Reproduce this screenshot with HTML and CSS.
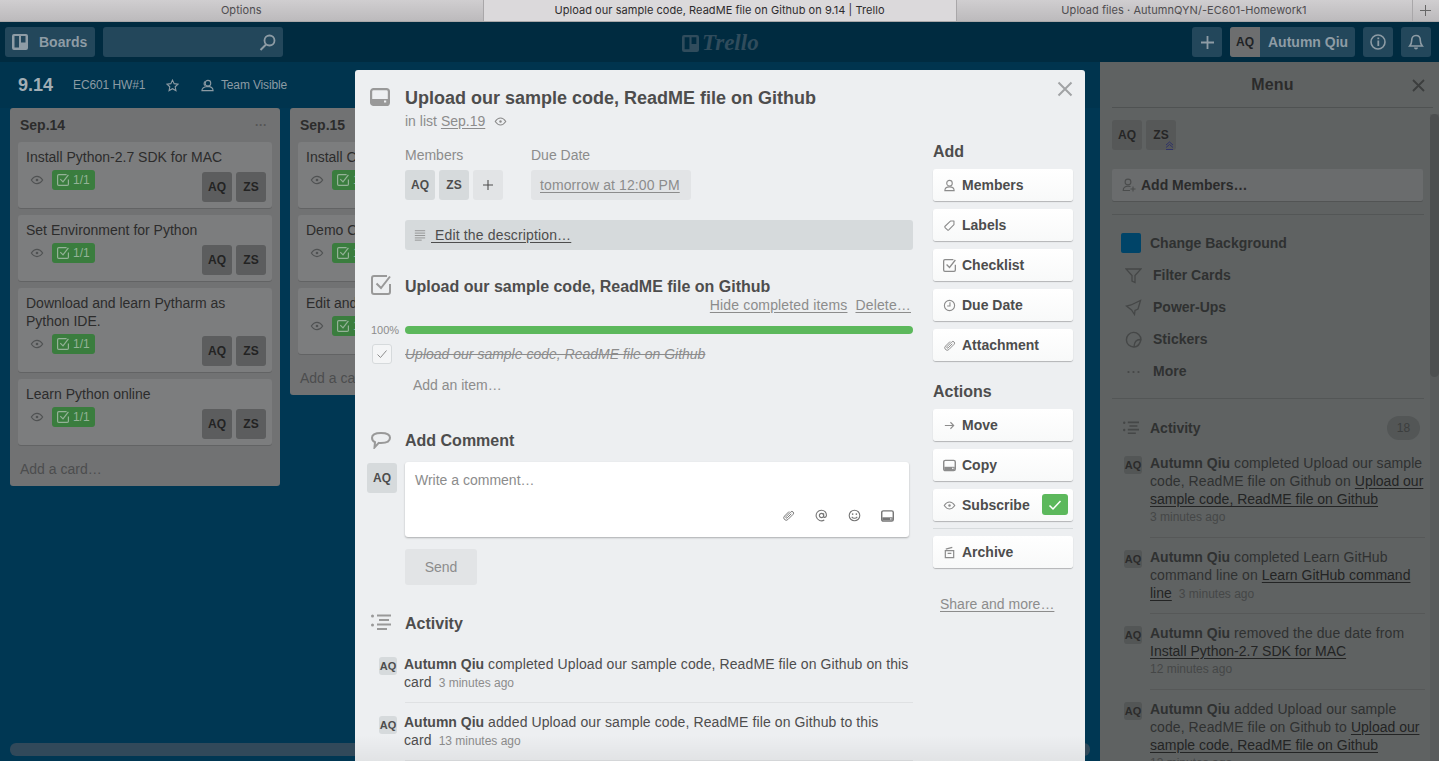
FILE: index.html
```html
<!DOCTYPE html>
<html lang="en">
<head>
<meta charset="utf-8">
<title>Upload our sample code, ReadME file on Github on 9.14 | Trello</title>
<link rel="stylesheet" href="styles.css">
</head>
<body>
<svg class="sprites" width="0" height="0" aria-hidden="true">
  <symbol id="i-card" viewBox="0 0 20 18"><rect x="1.100" y="1.100" width="17.800" height="15.800" rx="2.500" fill="none" stroke="currentColor" stroke-width="2.200"/><path d="M2 11h16v5H2z" fill="currentColor"/><rect x="14" y="12.500" width="2.200" height="2" fill="#eeeff1"/></symbol>
  <symbol id="i-eye" viewBox="0 0 16 16"><path d="M1.500 8C3.500 5 5.600 3.800 8 3.800S12.500 5 14.500 8c-2 3-4.100 4.200-6.500 4.200S3.500 11 1.500 8z" fill="none" stroke="currentColor" stroke-width="1.300"/><circle cx="8" cy="8" r="1.500" fill="currentColor"/></symbol>
  <symbol id="i-check" viewBox="0 0 20 20"><path d="M19 9v8a2 2 0 0 1-2 2H3a2 2 0 0 1-2-2V3a2 2 0 0 1 2-2h13" fill="none" stroke="currentColor" stroke-width="2"/><path d="M5.500 8.500l4.500 4.500 9-11.500" fill="none" stroke="currentColor" stroke-width="2"/></symbol>
  <symbol id="i-desc" viewBox="0 0 14 14"><path d="M1 2h12M1 4.800h12M1 7.600h12M1 10.400h12M1 13h8" stroke="currentColor" stroke-width="1" fill="none"/></symbol>
  <symbol id="i-list" viewBox="0 0 20 17"><circle cx="1.500" cy="2" r="1.500" fill="currentColor"/><circle cx="1.500" cy="11" r="1.500" fill="currentColor"/><path d="M6 1.500h14M8 6h10M6 10.500h14M6 15h10" stroke="currentColor" stroke-width="2" fill="none"/></symbol>
  <symbol id="i-comment" viewBox="0 0 20 17"><path d="M10 1c5.200 0 9 1.500 9 4.800s-3.800 5.200-9 5.200c-.8 0-1.500 0-2.200-.1L3.500 15.500l.5-5.300C2 9.300 1 7.800 1 5.800 1 2.500 4.800 1 10 1z" fill="none" stroke="currentColor" stroke-width="2"/></symbol>
  <symbol id="i-member" viewBox="0 0 14 14"><circle cx="7" cy="4.500" r="3" fill="none" stroke="currentColor" stroke-width="1.200"/><path d="M2 12.500c0-3 2-4 5-4s5 1 5 4z" fill="none" stroke="currentColor" stroke-width="1.200"/></symbol>
  <symbol id="i-member-add" viewBox="0 0 14 14"><circle cx="6" cy="4" r="2.900" fill="none" stroke="currentColor" stroke-width="1.100"/><path d="M8 12.500H1.200c0-3 1.800-4.300 4.800-4.300 1 0 1.800.1 2.500.4" fill="none" stroke="currentColor" stroke-width="1.100"/><path d="M11 8.500v5M8.500 11h5" fill="none" stroke="currentColor" stroke-width="1.100"/></symbol>
  <symbol id="i-label" viewBox="0 0 14 14"><path d="M8 2.200h3.800v3.800L6.200 11.800a1 1 0 0 1-1.400 0L2.200 9.200a1 1 0 0 1 0-1.400z" fill="none" stroke="currentColor" stroke-width="1.200" stroke-linejoin="round"/></symbol>
  <symbol id="i-clock" viewBox="0 0 14 14"><circle cx="7" cy="7" r="5.500" fill="none" stroke="currentColor" stroke-width="1.200"/><path d="M7.500 3.500V7.500H4.500" fill="none" stroke="currentColor" stroke-width="1.200"/></symbol>
  <symbol id="i-clip" viewBox="0 0 14 14"><g transform="rotate(45 7 7)"><path d="M4.400 3.500v7a2.600 2.600 0 0 0 5.200 0V2.600a1.800 1.800 0 0 0-3.600 0V9.800a.9.900 0 0 0 1.800 0V3.500" fill="none" stroke="currentColor" stroke-width="1"/></g></symbol>
  <symbol id="i-arrow" viewBox="0 0 14 14"><path d="M2 7h9.500M8 3.500L11.500 7 8 10.500" fill="none" stroke="currentColor" stroke-width="1.200"/></symbol>
  <symbol id="i-archive" viewBox="0 0 14 14"><path d="M2.500 5h9v7.500h-9zM5 8h4" fill="none" stroke="currentColor" stroke-width="1.300"/><path d="M3 3.300L10 1.500" fill="none" stroke="currentColor" stroke-width="1.300"/></symbol>
  <symbol id="i-at" viewBox="0 0 14 14"><circle cx="7" cy="7" r="2.300" fill="none" stroke="currentColor" stroke-width="1.200"/><path d="M9.300 4.700V8c0 1.500 2.700 1.500 3-.8C12.500 3.500 10 1.300 7 1.300a5.700 5.700 0 1 0 3 10.500" fill="none" stroke="currentColor" stroke-width="1.200"/></symbol>
  <symbol id="i-smile" viewBox="0 0 14 14"><circle cx="7" cy="7" r="5.700" fill="none" stroke="currentColor" stroke-width="1.200"/><circle cx="5" cy="5.500" r=".9" fill="currentColor"/><circle cx="9" cy="5.500" r=".9" fill="currentColor"/><path d="M4 8.500c1.500 2 4.500 2 6 0" fill="none" stroke="currentColor" stroke-width="1.200"/></symbol>
</svg>

<nav class="tabs">
  <div class="tab">Options</div>
  <div class="tab tab-active">Upload our sample code, ReadME file on Github on 9.14 | Trello</div>
  <div class="tab">Upload files · AutumnQYN/-EC601-Homework1</div>
  <div class="tab-plus"><svg width="13" height="13" viewBox="0 0 13 13"><path d="M6.500 1v11M1 6.500h11" stroke="currentColor" stroke-width="1" fill="none"/></svg></div>
</nav>

<header class="topbar">
  <div class="topbar-left">
    <div class="hbtn boards-btn">
      <svg class="boards-icon" width="16" height="16" viewBox="0 0 16 16"><path fill-rule="evenodd" d="M2 0h12a2 2 0 0 1 2 2v12a2 2 0 0 1-2 2H2a2 2 0 0 1-2-2V2a2 2 0 0 1 2-2zm.500 2v11.500h4.500V2zM9 2v6.500h4.500V2z" fill="currentColor"/></svg>
      <span>Boards</span>
    </div>
    <div class="hbtn search">
      <svg width="17" height="17" viewBox="0 0 17 17"><circle cx="10.500" cy="6.500" r="5" fill="none" stroke="currentColor" stroke-width="1.800"/><path d="M7 10.500L1.500 16" stroke="currentColor" stroke-width="2" fill="none"/></svg>
    </div>
  </div>
  <div class="logo">
    <svg width="17" height="17" viewBox="0 0 16 16"><path fill-rule="evenodd" d="M2 0h12a2 2 0 0 1 2 2v12a2 2 0 0 1-2 2H2a2 2 0 0 1-2-2V2a2 2 0 0 1 2-2zm.500 2v11.500h4.500V2zM9 2v6.500h4.500V2z" fill="currentColor"/></svg>
    <span>Trello</span>
  </div>
  <div class="topbar-right">
    <div class="hbtn square"><svg width="15" height="15" viewBox="0 0 15 15"><path d="M7.500 1v13M1 7.500h13" stroke="currentColor" stroke-width="1.800" fill="none"/></svg></div>
    <div class="hbtn user"><span class="user-av">AQ</span><span class="user-name">Autumn Qiu</span></div>
    <div class="hbtn square"><svg width="16" height="16" viewBox="0 0 16 16"><circle cx="8" cy="8" r="7" fill="none" stroke="currentColor" stroke-width="1.600"/><path d="M8.300 6.500v5.500M8.300 3.500v1.800" stroke="currentColor" stroke-width="1.800" fill="none"/></svg></div>
    <div class="hbtn square"><svg width="16" height="17" viewBox="0 0 16 17"><path d="M8 1.500c3 0 4.300 2 4.300 5 0 3 .7 4 2 5.500H1.700C3 10.500 3.700 9.500 3.700 6.500c0-3 1.300-5 4.300-5z" fill="none" stroke="currentColor" stroke-width="1.600"/><path d="M6 13.500c0 2.500 4 2.500 4 0" fill="currentColor"/></svg></div>
  </div>
</header>

<div class="workspace">
  <main class="board">
    <div class="board-head">
      <span class="board-title">9.14</span>
      <span class="board-org">EC601 HW#1</span>
      <svg class="star" width="13" height="13" viewBox="0 0 14 14"><path d="M7 1.200l1.800 3.800 4.100.5-3 2.900.8 4.100L7 10.500 3.300 12.500l.8-4.100-3-2.900 4.100-.5z" fill="none" stroke="currentColor" stroke-width="1.200"/></svg>
      <svg class="team" width="13" height="13" viewBox="0 0 14 14"><circle cx="7.500" cy="4.500" r="3" fill="none" stroke="currentColor" stroke-width="1.200"/><path d="M4.500 2.800C3 3.500 3 6 4.200 7M1 12.500c0-2.500 1.500-4 5.500-4.500 3.500 0 6.500 1.500 6.500 4.500z" fill="none" stroke="currentColor" stroke-width="1.200"/></svg>
      <span class="board-vis">Team Visible</span>
    </div>
    <div class="lists">
      <section class="list">
        <div class="list-head"><span>Sep.14</span><span class="dots">···</span></div>
        <article class="bcard">
          <p>Install Python-2.7 SDK for MAC</p>
          <div class="bcard-foot">
            <div class="badges"><svg class="beye"><use href="#i-eye"/></svg><span class="chk"><svg><use href="#i-check"/></svg>1/1</span></div>
            <div class="avs"><span class="av">AQ</span><span class="av">ZS</span></div>
          </div>
        </article>
        <article class="bcard">
          <p>Set Environment for Python</p>
          <div class="bcard-foot">
            <div class="badges"><svg class="beye"><use href="#i-eye"/></svg><span class="chk"><svg><use href="#i-check"/></svg>1/1</span></div>
            <div class="avs"><span class="av">AQ</span><span class="av">ZS</span></div>
          </div>
        </article>
        <article class="bcard">
          <p>Download and learn Pytharm as Python IDE.</p>
          <div class="bcard-foot">
            <div class="badges"><svg class="beye"><use href="#i-eye"/></svg><span class="chk"><svg><use href="#i-check"/></svg>1/1</span></div>
            <div class="avs"><span class="av">AQ</span><span class="av">ZS</span></div>
          </div>
        </article>
        <article class="bcard">
          <p>Learn Python online</p>
          <div class="bcard-foot">
            <div class="badges"><svg class="beye"><use href="#i-eye"/></svg><span class="chk"><svg><use href="#i-check"/></svg>1/1</span></div>
            <div class="avs"><span class="av">AQ</span><span class="av">ZS</span></div>
          </div>
        </article>
        <div class="add-card">Add a card…</div>
      </section>
      <section class="list">
        <div class="list-head"><span>Sep.15</span><span class="dots">···</span></div>
        <article class="bcard">
          <p>Install Cmake</p>
          <div class="bcard-foot">
            <div class="badges"><svg class="beye"><use href="#i-eye"/></svg><span class="chk"><svg><use href="#i-check"/></svg>1/1</span></div>
            <div class="avs"><span class="av">AQ</span><span class="av">ZS</span></div>
          </div>
        </article>
        <article class="bcard">
          <p>Demo Code</p>
          <div class="bcard-foot">
            <div class="badges"><svg class="beye"><use href="#i-eye"/></svg><span class="chk"><svg><use href="#i-check"/></svg>1/1</span></div>
            <div class="avs"><span class="av">AQ</span><span class="av">ZS</span></div>
          </div>
        </article>
        <article class="bcard">
          <p>Edit and run</p>
          <div class="bcard-foot">
            <div class="badges"><svg class="beye"><use href="#i-eye"/></svg><span class="chk"><svg><use href="#i-check"/></svg>1/1</span></div>
            <div class="avs"><span class="av">AQ</span><span class="av">ZS</span></div>
          </div>
        </article>
        <div class="add-card">Add a card…</div>
      </section>
    </div>
    <div class="hscroll"></div>
  </main>

  <aside class="menu">
    <div class="menu-head"><span>Menu</span><svg class="menu-x" width="13" height="13" viewBox="0 0 13 13"><path d="M1 1l11 11M12 1L1 12" stroke="currentColor" stroke-width="1.800" fill="none"/></svg></div>
    <div class="menu-body">
      <div class="menu-avs">
        <span class="av">AQ</span>
        <span class="av av-admin">ZS<svg class="chev" width="9" height="9" viewBox="0 0 9 9"><path d="M1 4l3.500-3L8 4M1 6.500l3.500-3L8 6.500M1 8.500h7" fill="none" stroke="#2a2f6a" stroke-width=".9"/></svg></span>
      </div>
      <div class="add-members"><svg width="14" height="14"><use href="#i-member-add"/></svg>Add Members…</div>
      <div class="menu-links">
        <div class="mlink mlink-bg"><span class="swatch"></span>Change Background</div>
        <div class="mlink"><svg width="17" height="17" viewBox="0 0 17 17"><path d="M1 2h15L10 8.500V15.500L7 14V8.500z" fill="none" stroke="currentColor" stroke-width="1.300"/></svg>Filter Cards</div>
        <div class="mlink"><svg width="17" height="17" viewBox="0 0 17 17"><path d="M15.500 1.500L13 10l-3 1.500-.5 4-3-4.500L1.500 7l4.500-1z" fill="none" stroke="currentColor" stroke-width="1.300"/></svg>Power-Ups</div>
        <div class="mlink"><svg width="17" height="17" viewBox="0 0 17 17"><path d="M9 16a7.300 7.300 0 1 1 7-7.500C11.500 8 9 11 9 16zM9 16c3.500 0 6-3 7-7.500" fill="none" stroke="currentColor" stroke-width="1.400"/></svg>Stickers</div>
        <div class="mlink"><svg width="17" height="17" viewBox="0 0 17 17"><circle cx="3.500" cy="9" r="1.100" fill="currentColor"/><circle cx="8.500" cy="9" r="1.100" fill="currentColor"/><circle cx="13.500" cy="9" r="1.100" fill="currentColor"/></svg>More</div>
      </div>
      <div class="menu-act-head">
        <svg width="16" height="14"><use href="#i-list"/></svg><span>Activity</span><span class="count">18</span>
      </div>
      <div class="mact">
        <span class="mini">AQ</span>
        <p><b>Autumn Qiu</b> completed Upload our sample code, ReadME file on Github on <u>Upload our sample code, ReadME file on Github</u> <time class="block">3 minutes ago</time></p>
      </div>
      <div class="mact">
        <span class="mini">AQ</span>
        <p><b>Autumn Qiu</b> completed Learn GitHub command line on <u>Learn GitHub command line</u> <time>3 minutes ago</time></p>
      </div>
      <div class="mact">
        <span class="mini">AQ</span>
        <p><b>Autumn Qiu</b> removed the due date from <u>Install Python-2.7 SDK for MAC</u> <time class="block">12 minutes ago</time></p>
      </div>
      <div class="mact">
        <span class="mini">AQ</span>
        <p><b>Autumn Qiu</b> added Upload our sample code, ReadME file on Github to <u>Upload our sample code, ReadME file on Github</u> <time class="block">13 minutes ago</time></p>
      </div>
    </div>
    <div class="menu-scroll"></div>
  </aside>
</div>

<div class="modal">
  <svg class="modal-x" width="16" height="16" viewBox="0 0 16 16"><path d="M1.500 1.500l13 13M14.500 1.500l-13 13" stroke="currentColor" stroke-width="2" fill="none"/></svg>
  <div class="modal-title">
    <svg class="sec-icon" width="20" height="18"><use href="#i-card"/></svg>
    <h2>Upload our sample code, ReadME file on Github</h2>
  </div>
  <div class="in-list">in list <u>Sep.19</u><svg width="13" height="13"><use href="#i-eye"/></svg></div>
  <div class="modal-cols">
    <div class="modal-main">
      <div class="meta">
        <div class="meta-col">
          <div class="meta-label">Members</div>
          <div class="meta-row"><span class="av">AQ</span><span class="av">ZS</span><span class="av av-plus"><svg width="12" height="12" viewBox="0 0 12 12"><path d="M6 1v10M1 6h10" stroke="currentColor" stroke-width="1.100" fill="none"/></svg></span></div>
        </div>
        <div class="meta-col">
          <div class="meta-label">Due Date</div>
          <div class="due"><u>tomorrow at 12:00 PM</u></div>
        </div>
      </div>
      <div class="edit-desc"><svg width="12" height="12"><use href="#i-desc"/></svg><u>&nbsp;Edit the description…</u></div>

      <div class="sec-head check-head">
        <svg class="sec-icon" width="20" height="20"><use href="#i-check"/></svg>
        <h3>Upload our sample code, ReadME file on Github</h3>
      </div>
      <div class="check-actions"><u>Hide completed items</u><u>Delete…</u></div>
      <div class="progress"><span class="pct">100%</span><div class="bar"></div></div>
      <div class="item">
        <span class="box"><svg width="12" height="12" viewBox="0 0 12 12"><path d="M1.500 6.500l3 3 6-7" fill="none" stroke="currentColor" stroke-width="1"/></svg></span>
        <s>Upload our sample code, ReadME file on Github</s>
      </div>
      <div class="add-item">Add an item…</div>

      <div class="sec-head comment-head">
        <svg class="sec-icon" width="20" height="17"><use href="#i-comment"/></svg>
        <h3>Add Comment</h3>
      </div>
      <div class="comment-row">
        <span class="av comment-av">AQ</span>
        <div class="comment-box">
          <div class="placeholder">Write a comment…</div>
          <div class="comment-tools">
            <svg width="13" height="13"><use href="#i-clip"/></svg>
            <svg width="13" height="13"><use href="#i-at"/></svg>
            <svg width="13" height="13"><use href="#i-smile"/></svg>
            <svg width="13" height="12"><use href="#i-card"/></svg>
          </div>
        </div>
      </div>
      <div class="send">Send</div>

      <div class="sec-head activity-head">
        <svg class="sec-icon" width="20" height="17"><use href="#i-list"/></svg>
        <h3>Activity</h3>
      </div>
      <div class="act">
        <span class="mini">AQ</span>
        <p><b>Autumn Qiu</b> completed Upload our sample code, ReadME file on Github on this<br>card <time>3 minutes ago</time></p>
      </div>
      <div class="act">
        <span class="mini">AQ</span>
        <p><b>Autumn Qiu</b> added Upload our sample code, ReadME file on Github to this<br>card <time>13 minutes ago</time></p>
      </div>
    </div>
    <div class="modal-side">
      <h4 class="side-first">Add</h4>
      <div class="sbtn"><svg><use href="#i-member"/></svg>Members</div>
      <div class="sbtn"><svg><use href="#i-label"/></svg>Labels</div>
      <div class="sbtn"><svg><use href="#i-check"/></svg>Checklist</div>
      <div class="sbtn"><svg><use href="#i-clock"/></svg>Due Date</div>
      <div class="sbtn"><svg><use href="#i-clip"/></svg>Attachment</div>
      <h4 class="side-actions">Actions</h4>
      <div class="sbtn"><svg><use href="#i-arrow"/></svg>Move</div>
      <div class="sbtn"><svg><use href="#i-card"/></svg>Copy</div>
      <div class="sbtn"><svg><use href="#i-eye"/></svg>Subscribe<span class="on"><svg viewBox="0 0 14 14"><path d="M1.500 7.500l3.500 3.500 7.500-8" fill="none" stroke="currentColor" stroke-width="1.500"/></svg></span></div>
      <div class="side-sep"></div>
      <div class="sbtn"><svg><use href="#i-archive"/></svg>Archive</div>
      <div class="share"><u>Share and more…</u></div>
    </div>
  </div>
</div>
</body>
</html>
```
FILE: styles.css
```css
* { box-sizing: border-box; }
html, body { height: 100%; }
body {
  margin: 0;
  width: 1439px;
  height: 761px;
  overflow: hidden;
  font-family: "Liberation Sans", Arial, sans-serif;
  font-size: 14px;
  line-height: 18px;
  background: #003650;
  color: #4d4d4d;
  display: flex;
  flex-direction: column;
  position: relative;
}
p, h2, h3, h4 { margin: 0; }
u { text-underline-offset: 2px; }
.sprites { position: absolute; }

/* browser tabs */
.tabs {
  height: 22px;
  flex: none;
  display: flex;
  font-size: 11px;
  line-height: 20px;
  letter-spacing: .05px;
  color: #4f4d50;
  background: linear-gradient(#d0ced0, #bcbabc);
  border-bottom: 1px solid #a9a8a9;
  font-family: "Inter", "Liberation Sans", sans-serif;
}
.tab { width: 483.5px; text-align: center; border-right: 1px solid #a9a7a9; }
.tab:nth-child(3) { width: 456px; }
.tab-active { width: 473px; background: #dbd9db; color: #2e2c2e; }
.tab-plus { flex: 1; display: flex; align-items: center; justify-content: center; color: #666; }

/* header */
.topbar {
  height: 40px;
  flex: none;
  background: #002b40;
  display: flex;
  align-items: center;
  justify-content: space-between;
  padding: 0 8px 0 5px;
  position: relative;
}
.topbar-left, .topbar-right { display: flex; gap: 8px; align-items: center; }
.hbtn {
  height: 30px;
  border-radius: 3px;
  background: #23475b;
  color: #8e9ca5;
  display: flex;
  align-items: center;
}
.boards-btn { width: 90px; padding-left: 7px; gap: 11px; font-weight: 700; }
.search { width: 180px; justify-content: flex-end; padding-right: 7px; }
.square { width: 30px; justify-content: center; }
.user { overflow: hidden; width: 125px; font-weight: 700; }
.user-av { width: 30px; height: 30px; background: #6d6e6f; color: #1f2326; font-size: 12px; display: flex; align-items: center; justify-content: center; }
.user-name { padding-left: 8px; white-space: nowrap; }
.logo {
  position: absolute;
  left: 682px;
  top: 10px;
  display: flex;
  align-items: center;
  gap: 3px;
  color: #304c5c;
  font: italic 700 23px/22px "Liberation Serif", serif;
}

/* board area */
.workspace { flex: 1; display: flex; min-height: 0; }
.board { flex: 1; min-width: 0; position: relative; background: #003753; }
.board-head {
  height: 46px;
  display: flex;
  align-items: center;
  padding: 0 0 0 18px;
  color: #8c9ba4;
  font-size: 12px;
  background: #00344e;
}
.board-title { font-size: 18px; font-weight: 700; color: #a2aeb5; width: 55px; }
.board-org { width: 93px; letter-spacing: -.1px; }
.star { margin-right: 22px; }
.team { margin-right: 7px; }
.board-vis { letter-spacing: -.15px; }
.lists { display: flex; gap: 10px; padding: 0 0 0 10px; align-items: flex-start; }
.list { width: 270px; background: #717273; border-radius: 3px; padding: 0 8px; flex: none; }
.list-head { height: 34px; display: flex; justify-content: space-between; align-items: center; padding: 0 2px; font-weight: 700; color: #2c2c2c; }
.dots { color: #555; font-size: 12px; padding-right: 3px; }
.bcard { background: #7c7d7e; border-radius: 3px; box-shadow: 0 1px 0 #626364; margin-bottom: 7px; padding: 6px 6px 6px 8px; color: #2c2c2c; }
.bcard p { line-height: 18px; }
.bcard-foot { display: flex; justify-content: space-between; align-items: flex-start; margin-top: 6px; }
.badges { display: flex; align-items: center; gap: 8px; padding-left: 4px; margin-top: -2px; }
.beye { width: 14px; height: 14px; color: #505253; }
.chk { height: 20px; width: 43px; background: #3a7d3e; color: #94b297; border-radius: 3px; display: flex; align-items: center; gap: 4px; padding-left: 5px; font-size: 12px; }
.chk svg { width: 12px; height: 12px; }
.avs { display: flex; gap: 4px; }
.av {
  width: 30px; height: 30px;
  border-radius: 3px;
  background: #d6dadc;
  font-weight: 700;
  font-size: 12px;
  display: flex; align-items: center; justify-content: center;
  flex: none;
  position: relative;
}
.bcard .av { background: #5c5d5e; color: #232323; }
.add-card { height: 34px; display: flex; align-items: center; padding: 0 2px; color: #4c4d4e; }

.hscroll { position: absolute; left: 10px; right: 10px; bottom: 5px; height: 13px; background: #31495a; border-radius: 6px; }

/* right menu */
.menu { width: 339px; flex: none; background: #5f6262; position: relative; color: #2b2b2b; padding: 0 6px 0 12px; overflow: hidden; }
.menu-head { height: 46px; display: flex; align-items: center; justify-content: center; font-weight: 700; font-size: 16px; letter-spacing: .2px; border-bottom: 1px solid #4f5252; position: relative; }
.menu-x { position: absolute; right: 8px; top: 17px; color: #3c3e3e; }
.menu-body { padding-top: 12px; margin-right: 8px; }
.menu-avs { display: flex; gap: 4px; margin-bottom: 19px; }
.menu-avs .av { background: #565858; color: #262626; }
.chev { position: absolute; right: 2px; bottom: 0; }
.add-members { height: 32px; background: #6a6c6d; border-radius: 2px; box-shadow: 0 1px 0 #525454; display: flex; align-items: center; gap: 5px; padding-left: 10px; font-weight: 700; color: #2b2b2b; margin: 0 2px 13px 0; }
.add-members svg { color: #4a4c4c; }
.menu-links { border-top: 1px solid #535656; padding: 12px 0 11px; border-bottom: 1px solid #535656; margin-right: 1px; }
.mlink { height: 32px; display: flex; align-items: center; gap: 11px; padding-left: 13px; font-weight: 700; color: #2f3131; }
.mlink svg { color: #454747; }
.mlink-bg { padding-left: 9px; gap: 9px; }
.swatch { width: 20px; height: 20px; border-radius: 2px; background: #004468; }
.menu-act-head { height: 45px; display: flex; align-items: center; gap: 11px; padding: 13px 0 0 11px; font-weight: 700; color: #2f3131; }
.menu-act-head svg { color: #454747; }
.count { margin-left: auto; width: 33px; height: 24px; border-radius: 12px; background: #535656; color: #3c3e3e; font-weight: 400; font-size: 12px; text-align: center; line-height: 24px; margin-right: 5px; }
.mact { display: flex; gap: 8px; padding: 10px 0 0 12px; }
.mact p { flex: 1; padding-bottom: 10px; border-bottom: 1px solid #565858; color: #2f3131; letter-spacing: .08px; }
.mact b, .mact u { letter-spacing: 0; }
.mact u { color: #232424; }
.mini { width: 18px; height: 18px; border-radius: 3px; background: #535656; font-size: 11px; font-weight: 700; display: flex; align-items: center; justify-content: center; flex: none; color: inherit; }
.mact .mini { margin-top: 2px; }
.mact time { font-size: 12px; color: #454747; margin-left: 3px; letter-spacing: 0; }
.mact time.block { display: block; margin-left: 0; line-height: 19px; }
.menu-scroll { position: absolute; right: 0; top: 52px; bottom: 0; width: 9px; background: #595b5c; }
.menu-scroll::after { content: ""; position: absolute; left: 0; right: 0; top: 0; height: 263px; background: #4d4f50; border-radius: 5px; }

/* card modal */
.modal {
  position: absolute;
  left: 355px;
  top: 70px;
  width: 730px;
  height: 691px;
  background: #edeff1;
  border-radius: 3px 3px 0 0;
  padding: 16px 12px 0 50px;
  overflow: hidden;
  color: #4d4d4d;
}
.modal::after { content: ""; position: absolute; left: 0; right: 0; bottom: 0; height: 26px; background: linear-gradient(rgba(0,0,0,0), rgba(0,0,0,.05)); }
.modal-x { position: absolute; right: 12px; top: 11px; color: #a1a3a5; }
.modal-title { position: relative; height: 24px; display: flex; align-items: center; }
.modal-title h2 { font-size: 18px; line-height: 24px; }
.sec-icon { color: #999; position: absolute; left: -35px; top: 2px; }
.in-list { color: #8c8c8c; display: flex; align-items: center; gap: 3px; margin-top: 1px; height: 20px; }
.in-list u { margin-right: 6px; margin-left: 1px; }
.modal-cols { display: flex; gap: 20px; }
.modal-main { width: 508px; flex: none; position: relative; }
.meta { display: flex; gap: 28px; margin-top: 15px; }
.meta-label { color: #8c8c8c; height: 20px; }
.meta-row { display: flex; gap: 4px; margin-top: 4px; }
.meta-row .av { color: #4d4d4d; }
.av-plus { background: #e2e4e6; color: #999; }
.due { width: 160px; height: 30px; margin-top: 4px; background: #e2e4e6; border-radius: 3px; padding: 0 9px; display: flex; align-items: center; color: #8c8c8c; letter-spacing: .1px; white-space: nowrap; }
.edit-desc { height: 30px; background: #d6dadc; border-radius: 3px; margin-top: 20px; display: flex; align-items: center; padding-left: 9px; gap: 5px; color: #4d4d4d; letter-spacing: .15px; }
.edit-desc svg { color: #8c8c8c; }
.sec-head { position: relative; height: 24px; display: flex; align-items: center; }
.sec-head h3 { font-size: 16px; line-height: 24px; }
.check-head { margin-top: 25px; }
.check-head .sec-icon { top: 0; left: -34px; }
.check-actions { display: flex; justify-content: flex-end; gap: 8px; color: #8c8c8c; margin-top: -3px; height: 20px; padding-right: 2px; letter-spacing: .15px; }
.progress { position: relative; height: 8px; margin-top: 10px; }
.bar { height: 8px; border-radius: 4px; background: #5cb85c; }
.pct { position: absolute; left: -34px; top: -1px; font-size: 11px; line-height: 10px; color: #8c8c8c; }
.item { height: 32px; margin-top: 4px; position: relative; display: flex; align-items: center; color: #8c8c8c; font-style: italic; }
.box { position: absolute; left: -33px; top: 6px; width: 20px; height: 20px; border: 1px solid #d6dadc; border-radius: 3px; display: flex; align-items: center; justify-content: center; color: #8c8c8c; background: #f4f5f6; }
.add-item { color: #8c8c8c; padding-left: 8px; margin-top: 5px; height: 20px; line-height: 20px; }
.comment-head { margin-top: 34px; }
.comment-head .sec-icon { top: 3px; left: -34px; }
.comment-row { position: relative; margin-top: 9px; }
.comment-av { position: absolute; left: -38px; top: 1px; color: #4d4d4d; }
.comment-box { width: 504px; height: 75px; background: #fff; border-radius: 3px; box-shadow: 0 1px 2px rgba(0,0,0,.28); padding: 9px 10px; position: relative; color: #8c8c8c; }
.comment-tools { position: absolute; right: 15px; bottom: 15px; display: flex; align-items: center; gap: 20px; color: #777; }
.send { width: 72px; height: 36px; margin-top: 12px; border-radius: 3px; background: #e2e4e6; color: #8c8c8c; display: flex; align-items: center; justify-content: center; }
.activity-head { margin-top: 27px; }
.activity-head .sec-icon { top: 2px; left: -34px; }
.act { position: relative; padding: 19px 0 10px; border-bottom: 1px solid #dfe1e3; }
.act + .act { padding-top: 10px; }
.act p { letter-spacing: .1px; margin-left: -1px; }
.act b { letter-spacing: 0; }
.act .mini { position: absolute; left: -26px; top: 21px; background: #d6dadc; }
.act + .act .mini { top: 13px; }
.act time { font-size: 12px; color: #8c8c8c; margin-left: 3px; letter-spacing: 0; }
.modal-side { width: 140px; flex: none; }
.modal-side h4 { font-size: 16px; line-height: 20px; margin: 0 0 7px; }
.modal-side .side-first { margin-top: 11px; }
.modal-side .side-actions { margin-top: 21px; }
.sbtn { height: 32px; margin: 0 0 8px; background: linear-gradient(#ffffff, #f8f9f9); border-radius: 3px; box-shadow: 0 1px 1px rgba(0,0,0,.25); display: flex; align-items: center; padding-left: 10px; font-weight: 700; gap: 6px; color: #4d4d4d; position: relative; }
.sbtn > svg { width: 13px; height: 13px; color: #8c8c8c; flex: none; }
.on { position: absolute; right: 5px; top: 5px; width: 26px; height: 21px; border-radius: 3px; background: #5cb85c; color: #fff; display: flex; align-items: center; justify-content: center; }
.on svg { width: 14px; height: 14px; }
.side-sep { height: 1px; background: #d6dadc; margin: -1px 0 7px; }
.share { color: #8c8c8c; padding-left: 7px; margin-top: 27px; }
```
